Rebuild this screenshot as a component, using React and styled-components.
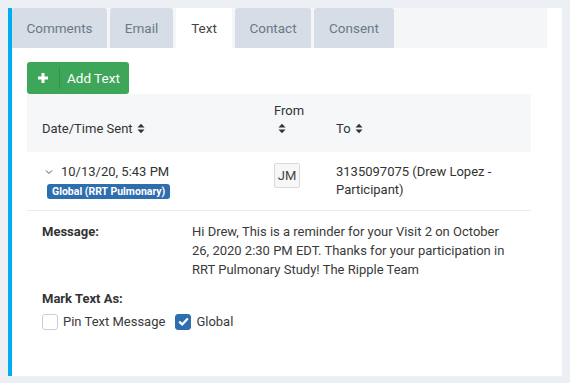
import React from 'react';
import styled, { createGlobalStyle } from 'styled-components';

const GlobalStyle = createGlobalStyle`
  body {
    margin: 8px;
    background: #eceff4;
    font-family: Roboto, "Liberation Sans", sans-serif;
    color: #3a3a3a;
  }
`;

const Card = styled.div`
  background: #fff;
  border-left: 4px solid #00aeef;
  height: 368px;
  padding-right: 15px;
  box-sizing: border-box;
`;

const TabBar = styled.div`
  display: flex;
  gap: 3px;
  background: #f4f6f8;
  height: 40px;
`;

const Tab = styled.div`
  display: flex;
  align-items: center;
  justify-content: center;
  width: ${(props) => props.width}px;
  border-radius: 3px 3px 0 0;
  background: ${(props) => (props.active ? '#fff' : '#d6dde6')};
  color: ${(props) => (props.active ? '#444' : '#6c7886')};
  font-size: 13.5px;
`;

const Content = styled.div`
  padding: 14px 16px 0 15px;
`;

const AddButton = styled.button`
  display: flex;
  align-items: center;
  height: 32px;
  width: 102px;
  padding: 0;
  border: none;
  border-radius: 3px;
  background: #3ea658;
  color: #fff;
  font-family: inherit;
  font-size: 13.5px;
`;

const PlusWrap = styled.span`
  display: flex;
  align-items: center;
  justify-content: center;
  width: 32px;
  height: 22px;
  border-right: 1px solid #33914b;
`;

const ButtonLabel = styled.span`
  padding-left: 7px;
`;

const Table = styled.div`
  width: 504px;
`;

const HeaderRow = styled.div`
  display: grid;
  grid-template-columns: 232px 77px 1fr;
  align-items: end;
  height: 58px;
  background: #f6f7f9;
  padding-bottom: 14px;
  box-sizing: border-box;
  font-size: 13px;
  color: #333;
`;

const HeadCell = styled.div`
  padding-left: ${(props) => props.$pad ?? 15}px;
  line-height: 18px;
`;

const Sort = () => (
  <svg width="8" height="11" viewBox="0 0 8 11" style={{ marginLeft: 4, verticalAlign: -1 }}>
    <path d="M0.5 4.5 L4 0.8 L7.5 4.5 Z M0.5 6.5 L4 10.2 L7.5 6.5 Z" fill="#333" />
  </svg>
);

const DataRow = styled.div`
  display: grid;
  grid-template-columns: 232px 77px 1fr;
  padding: 11px 0 11px;
  border-bottom: 1px solid #e8eaed;
  font-size: 13px;
  color: #333;
`;

const DateCell = styled.div`
  padding-left: 18px;
`;

const DateLine = styled.div`
  display: flex;
  align-items: center;
  gap: 8px;
  line-height: 18px;
`;

const Badge = styled.span`
  display: inline-block;
  margin-top: 3px;
  margin-left: 2px;
  padding: 0 5px;
  height: 15px;
  line-height: 15px;
  border-radius: 3px;
  background: #2e6eae;
  color: #fff;
  font-size: 10.5px;
  font-weight: 700;
`;

const Initials = styled.span`
  display: inline-flex;
  align-items: center;
  justify-content: center;
  width: 24px;
  height: 23px;
  border: 1px solid #d9d9d9;
  border-radius: 2px;
  background: #f7f7f7;
  font-size: 13px;
  color: #444;
`;

const FromCell = styled.div`
  padding-left: 15px;
`;

const ToCell = styled.div`
  line-height: 18px;
`;

const Details = styled.div`
  display: grid;
  grid-template-columns: 150px 325px;
  padding: 11px 0 0 15px;
  font-size: 13px;
  color: #3a3a3a;
  line-height: 19px;
`;

const Label = styled.div`
  font-weight: 700;
  color: #333;
`;

const MarkBlock = styled.div`
  padding: 10px 0 0 15px;
  font-size: 13px;
  line-height: 19px;
`;

const Options = styled.div`
  display: flex;
  align-items: center;
  gap: 10px;
  margin-top: 4px;
`;

const Option = styled.label`
  display: flex;
  align-items: center;
  gap: 5px;
  color: #3a3a3a;
`;

const Box = styled.span`
  display: inline-flex;
  align-items: center;
  justify-content: center;
  width: 16px;
  height: 16px;
  box-sizing: border-box;
  border-radius: 3px;
  border: 1px solid ${(props) => (props.$checked ? '#2e6eae' : '#c6d0d8')};
  background: ${(props) => (props.$checked ? '#2e6eae' : '#fff')};
`;

const tabs = [
  { name: 'Comments', width: 95 },
  { name: 'Email', width: 63 },
  { name: 'Text', width: 56, active: true },
  { name: 'Contact', width: 76 },
  { name: 'Consent', width: 80 },
];

export default function App() {
  return (
    <>
      <GlobalStyle />
      <Card>
        <TabBar>
          {tabs.map((t) => (
            <Tab key={t.name} width={t.width} active={t.active}>{t.name}</Tab>
          ))}
        </TabBar>
        <Content>
          <AddButton>
            <PlusWrap>
              <svg width="12" height="12" viewBox="0 0 12 12">
                <path d="M6 1 V11 M1 6 H11" stroke="#fff" strokeWidth="3" />
              </svg>
            </PlusWrap>
            <ButtonLabel>Add Text</ButtonLabel>
          </AddButton>
          <Table>
            <HeaderRow>
              <HeadCell>Date/Time Sent<Sort /></HeadCell>
              <HeadCell>
                From
                <div><Sort /></div>
              </HeadCell>
              <HeadCell $pad={0}>To<Sort /></HeadCell>
            </HeaderRow>
            <DataRow>
              <DateCell>
                <DateLine>
                  <svg width="8" height="6" viewBox="0 0 8 6">
                    <path d="M1 1.5 L4 4.5 L7 1.5" stroke="#555" strokeWidth="1" fill="none" />
                  </svg>
                  10/13/20, 5:43 PM
                </DateLine>
                <Badge>Global (RRT Pulmonary)</Badge>
              </DateCell>
              <FromCell>
                <Initials>JM</Initials>
              </FromCell>
              <ToCell>3135097075 (Drew Lopez -<br />Participant)</ToCell>
            </DataRow>
          </Table>
          <Details>
            <Label>Message:</Label>
            <div>
              Hi Drew, This is a reminder for your Visit 2 on October 26, 2020 2:30 PM EDT. Thanks for your participation in RRT Pulmonary Study! The Ripple Team
            </div>
          </Details>
          <MarkBlock>
            <Label>Mark Text As:</Label>
            <Options>
              <Option><Box />Pin Text Message</Option>
              <Option>
                <Box $checked>
                  <svg width="11" height="9" viewBox="0 0 11 9">
                    <path d="M1.2 4.6 L4.2 7.4 L9.8 1.4" stroke="#fff" strokeWidth="2.2" fill="none" />
                  </svg>
                </Box>
                Global
              </Option>
            </Options>
          </MarkBlock>
        </Content>
      </Card>
    </>
  );
}
